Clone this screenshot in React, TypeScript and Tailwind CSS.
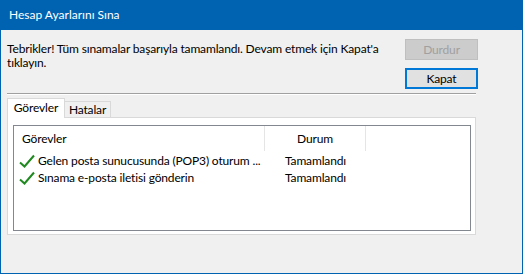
import React from 'react';

const font = { fontFamily: 'Lato, "Noto Sans", sans-serif' };

const Check: React.FC = () => (
  <svg width="16" height="14" viewBox="0 0 16 14" className="shrink-0">
    <path d="M1 8.5 L5.5 12.5 L15 1.5" fill="none" stroke="#1f8a1f" strokeWidth="2" />
  </svg>
);

const Row: React.FC<{ task: string; status: string }> = (props) => (
  <div className="flex items-center h-[17px]">
    <div className="w-[251px] flex items-center pl-[5px] gap-[3px]">
      <Check />
      <span className="whitespace-nowrap">{props.task}</span>
    </div>
    <div className="w-[101px] text-center">{props.status}</div>
  </div>
);

export default function App() {
  return (
    <div
      className="w-[523px] h-[274px] flex flex-col border-x border-b border-[#0063b1] text-[12px] text-black tracking-[-0.15px]"
      style={font}
    >
      <div className="h-[30px] shrink-0 bg-[#0063b1] text-white flex items-center pl-[9px] -mx-px tracking-normal">
        Hesap Ayarlarını Sına
      </div>
      <div className="flex-1 bg-[#f0f0f0] pl-[6px] pr-[44px] pt-[9px] flex flex-col">
        <div className="flex justify-between">
          <p className="w-[385px] leading-[14px] pt-[3px]">
            Tebrikler! Tüm sınamalar başarıyla tamamlandı. Devam etmek için Kapat'a tıklayın.
          </p>
          <div className="flex flex-col gap-[8px]">
            <button className="w-[73px] h-[21px] bg-[#cccccc] border border-[#bfbfbf] text-[#a0a0a0] leading-none">
              Durdur
            </button>
            <button className="w-[73px] h-[21px] bg-[#e1e1e1] border-2 border-[#0078d7] leading-none">
              Kapat
            </button>
          </div>
        </div>
        <div className="mt-[4px] h-[2px] w-[469px] border-t border-[#a0a0a0] border-b border-b-white" />
        <div className="flex items-end mt-[2px] h-[20px]">
          <div className="w-[58px] h-[20px] bg-white border border-b-0 border-[#d9d9d9] flex items-center justify-center relative z-10 -mb-px pb-[2px]">
            Görevler
          </div>
          <div className="w-[46px] h-[16px] bg-[#f0f0f0] border border-l-0 border-b-0 border-[#d9d9d9] flex items-center justify-center">
            Hatalar
          </div>
        </div>
        <div className="w-[469px] h-[118px] bg-white border border-[#d9d9d9] px-[5px] pt-[7px]">
          <div className="w-[458px] h-[106px] border border-[#828790]">
            <div className="flex h-[25px] items-center">
              <div className="w-[251px] pl-[8px] h-full flex items-center border-r border-[#e5e5e5]">Görevler</div>
              <div className="w-[101px] h-full flex items-center justify-center border-r border-[#e5e5e5]">Durum</div>
            </div>
            <div className="pt-[1px]">
              <Row task="Gelen posta sunucusunda (POP3) oturum ..." status="Tamamlandı" />
              <Row task="Sınama e-posta iletisi gönderin" status="Tamamlandı" />
            </div>
          </div>
        </div>
      </div>
    </div>
  );
}
